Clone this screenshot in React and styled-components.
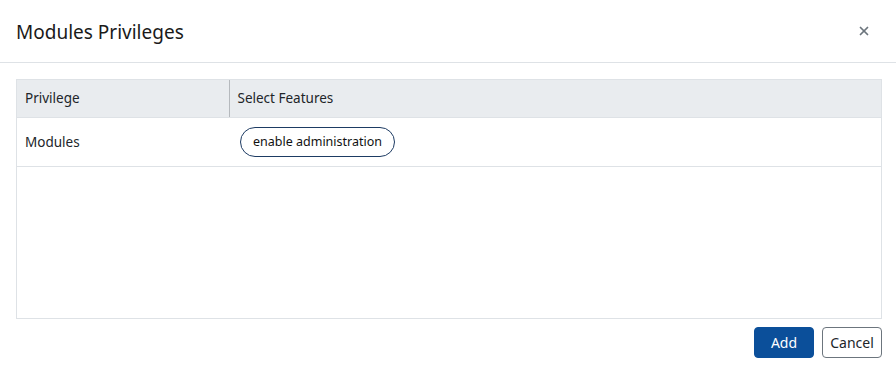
import React from "react";
import styled, { createGlobalStyle } from "styled-components";
import { X } from "lucide-react";

const GlobalStyle = createGlobalStyle`
  html, body {
    margin: 0;
    padding: 0;
    background: #fff;
    font-family: "Segoe UI", "Noto Sans", "Open Sans", sans-serif;
    color: #212529;
  }
  * { box-sizing: border-box; }
`;

const Modal = styled.div`
  width: 896px;
  height: 379px;
  display: flex;
  flex-direction: column;
  background: #fff;
`;

const Header = styled.div`
  display: flex;
  align-items: center;
  justify-content: space-between;
  height: 63px;
  padding: 0 25px 0 16px;
  border-bottom: 1px solid #dee2e6;
`;

const Title = styled.h5`
  margin: 0;
  font-size: 19px;
  font-weight: 400;
  color: #1a1a1a;
  padding-top: 2px;
`;

const CloseButton = styled.button`
  border: none;
  background: none;
  padding: 0;
  display: flex;
  color: #6c757d;
  cursor: pointer;
`;

const Body = styled.div`
  padding: 16px 14px 0 16px;
`;

const TableBox = styled.div`
  height: 240px;
  border: 1px solid #dee2e6;
`;

const Table = styled.table`
  width: 100%;
  border-collapse: collapse;
  font-size: 13.5px;
`;

const HeadCell = styled.th`
  text-align: left;
  font-weight: 400;
  background: #e9ecef;
  height: 37px;
  padding: 0 8px;
  border-bottom: 1px solid #dee2e6;
  border-left: ${(p) => (p.divider ? "1.5px solid #b5b9bd" : "none")};
  width: ${(p) => p.w || "auto"};
`;

const Cell = styled.td`
  height: 49px;
  padding: 0 8px;
  border-bottom: 1px solid #dee2e6;
`;

const Pill = styled.span`
  display: inline-flex;
  align-items: center;
  height: 30px;
  padding: 0 12px;
  margin-left: 3px;
  border: 1px solid #1d3b63;
  border-radius: 15px;
  font-size: 12.5px;
  color: #111;
`;

const Footer = styled.div`
  display: flex;
  justify-content: flex-end;
  gap: 8px;
  padding: 8px 14px 0 16px;
`;

const Button = styled.button`
  height: 31px;
  width: ${(p) => p.w}px;
  border-radius: 4px;
  font-family: inherit;
  font-size: 14px;
  cursor: pointer;
  background: ${(p) => (p.primary ? "#0b4f9a" : "#fff")};
  color: ${(p) => (p.primary ? "#fff" : "#212529")};
  border: 1px solid ${(p) => (p.primary ? "#0b4f9a" : "#6c757d")};
`;

export default function App() {
  return (
    <>
      <GlobalStyle />
      <Modal>
        <Header>
          <Title>Modules Privileges</Title>
          <CloseButton aria-label="Close">
            <X size={14} strokeWidth={3} />
          </CloseButton>
        </Header>
        <Body>
          <TableBox>
            <Table>
              <thead>
                <tr>
                  <HeadCell w="212px">Privilege</HeadCell>
                  <HeadCell divider>Select Features</HeadCell>
                </tr>
              </thead>
              <tbody>
                <tr>
                  <Cell>Modules</Cell>
                  <Cell>
                    <Pill>enable administration</Pill>
                  </Cell>
                </tr>
              </tbody>
            </Table>
          </TableBox>
        </Body>
        <Footer>
          <Button primary w={60}>Add</Button>
          <Button w={60}>Cancel</Button>
        </Footer>
      </Modal>
    </>
  );
}
